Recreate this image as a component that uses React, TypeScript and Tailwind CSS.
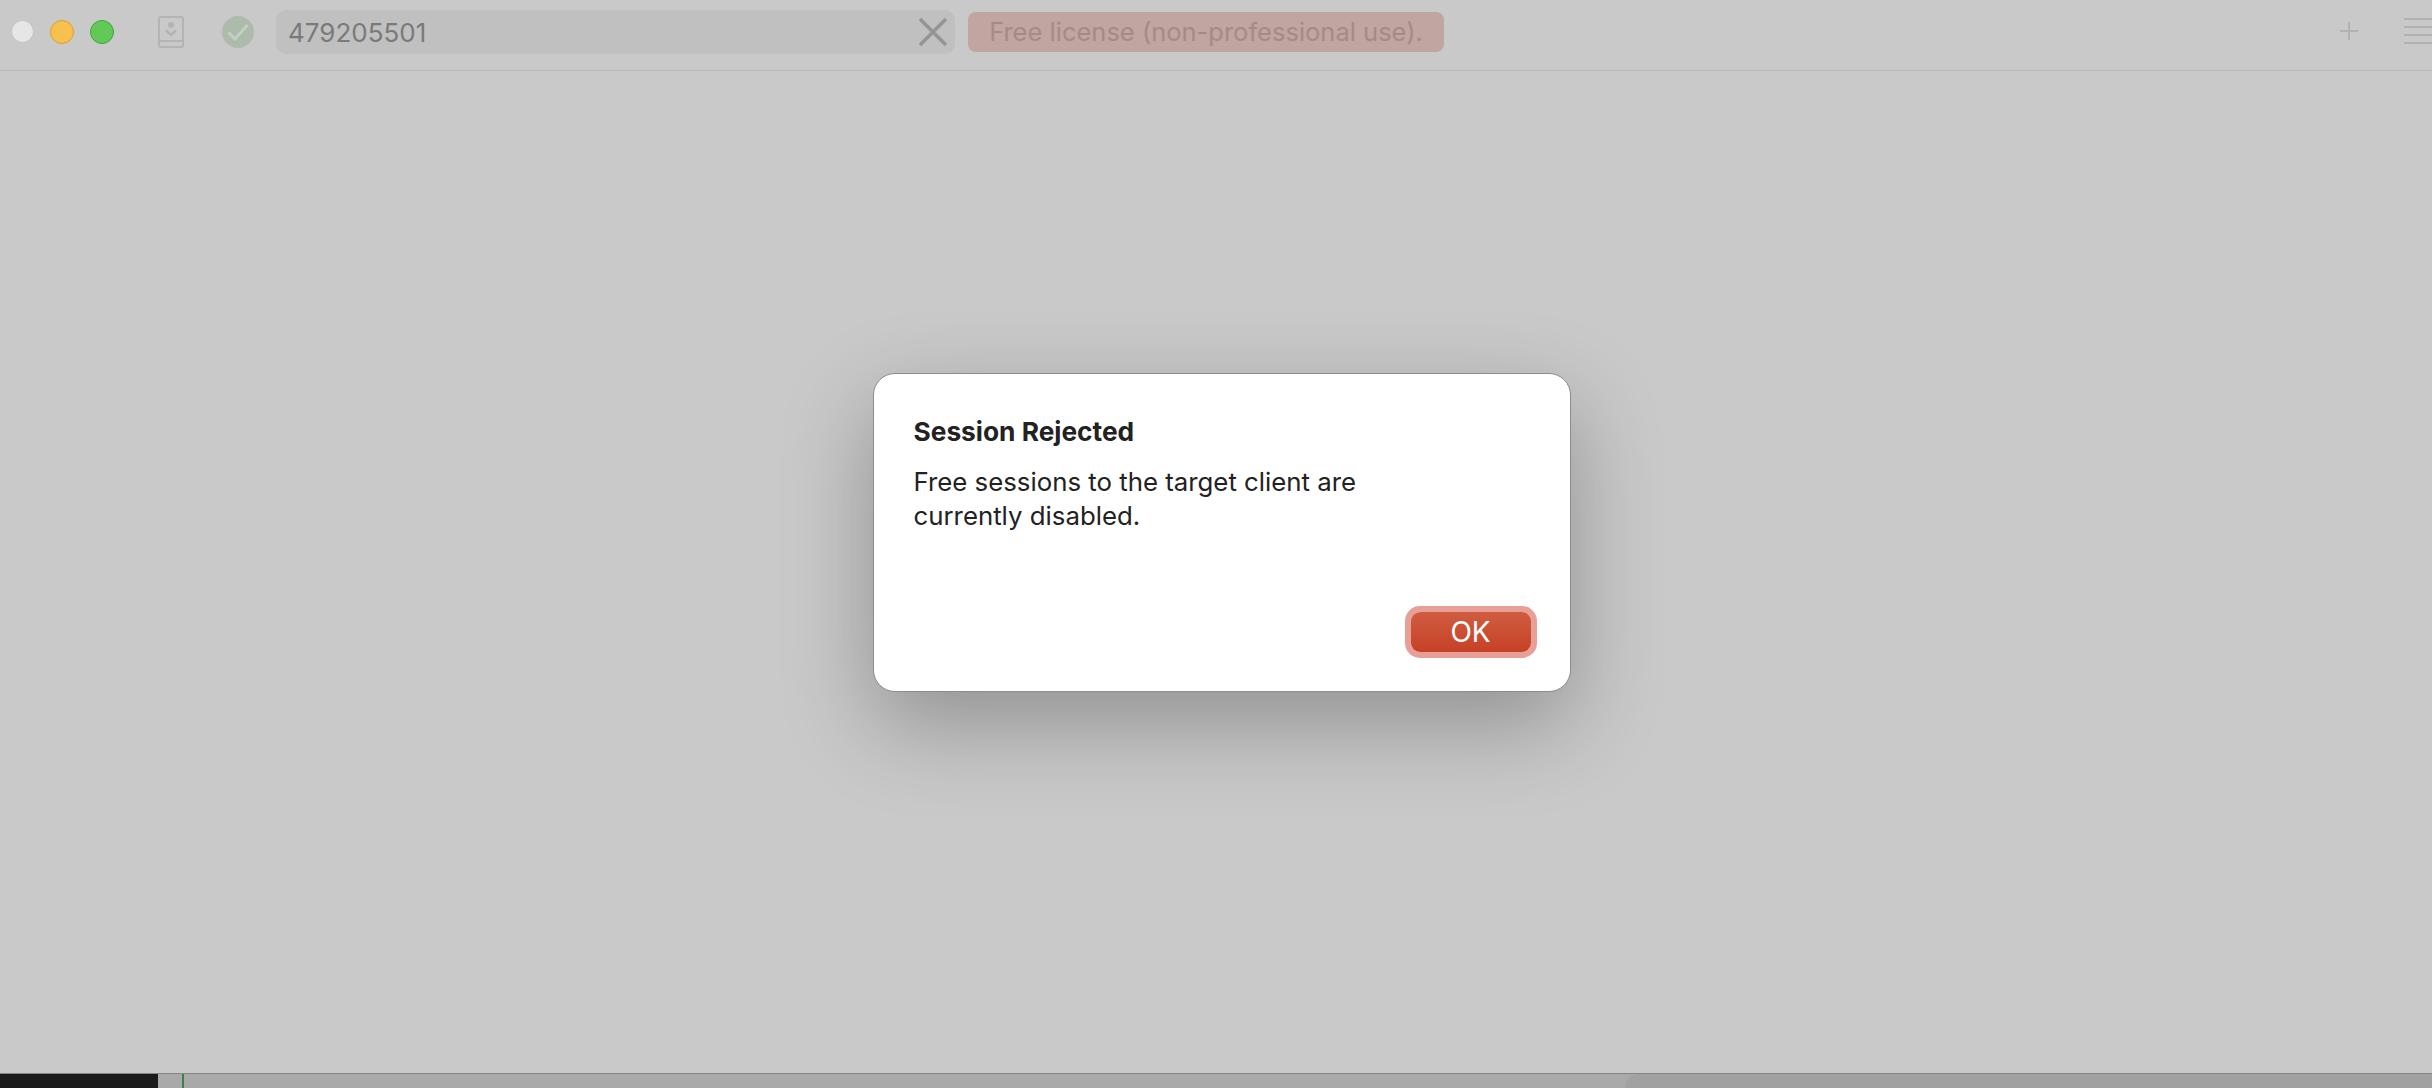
import React from 'react';

const uiFont = "font-['Inter','Noto_Sans',sans-serif]";

const Toolbar: React.FC = () => (
  <header className="flex h-[71px] shrink-0 items-start border-b border-[#bababa] bg-[#c9c9c9]">
    <div className="mt-[20px] ml-[11px] flex gap-[16px]">
      <div className="size-[23px] rounded-full border border-[#c4c4c4] bg-[#e6e6e6]" />
      <div className="size-[24px] rounded-full border border-[#d9a02f] bg-[#f7c04f]" />
      <div className="size-[24px] rounded-full border border-[#3fa73a] bg-[#62c858]" />
    </div>
    <svg className="mt-[16px] ml-[44px] shrink-0" width="26" height="32" viewBox="0 0 26 32" fill="none" stroke="#b4b4b4" strokeWidth="2">
      <path d="M3 1h20a2 2 0 0 1 2 2v26a2 2 0 0 1-2 2H3a2 2 0 0 1-2-2V3a2 2 0 0 1 2-2z" />
      <path d="M1 25h24" />
      <circle cx="13" cy="9" r="3" fill="#b4b4b4" stroke="none" />
      <path d="M8 14.5l5 4.5 5-4.5" strokeWidth="2.6" />
    </svg>
    <div className="mt-[16px] ml-[38px] flex size-[32px] shrink-0 items-center justify-center rounded-full bg-[#adbbad]">
      <svg width="22" height="18" viewBox="0 0 22 18" fill="none" stroke="#c6cfc6" strokeWidth="3">
        <path d="M1.5 9.5l6.5 6.5L20.5 2" />
      </svg>
    </div>
    <div className="mt-[10px] ml-[22px] flex h-[44px] w-[679px] shrink-0 items-center justify-between rounded-[10px] bg-[#c0c0c0] pr-[8px] pl-[12px]">
      <span className={`${uiFont} mt-[2px] text-[26px] leading-none text-[#7a7a7a]`}>479205501</span>
      <svg width="28" height="28" viewBox="0 0 28 28" fill="none" stroke="#949494" strokeWidth="3.5">
        <path d="M1 1l26 26M27 1L1 27" />
      </svg>
    </div>
    <div className={`${uiFont} mt-[12px] ml-[13px] flex h-[40px] w-[476px] shrink-0 items-center justify-center rounded-[8px] bg-[#c0a5a0] text-[25.5px] leading-none text-[#a58b87]`}>
      Free license (non-professional use).
    </div>
    <div className="flex-1" />
    <svg className="mt-[22px] mr-[46px] shrink-0" width="18" height="18" viewBox="0 0 18 18" stroke="#b2b2b2" strokeWidth="2">
      <path d="M0 9h18M9 0v18" />
    </svg>
    <div className="mt-[18px] flex w-[28px] shrink-0 flex-col gap-[6px]">
      <div className="h-[2px] bg-[#b2b2b2]" />
      <div className="h-[2px] bg-[#b2b2b2]" />
      <div className="h-[2px] bg-[#b2b2b2]" />
      <div className="h-[2px] bg-[#b2b2b2]" />
    </div>
  </header>
);

const Dialog: React.FC = () => (
  <div className={`${uiFont} flex h-[319px] w-[698px] flex-col rounded-[22px] border border-[#8c8c8c] bg-white pt-[41px] pr-[34px] pl-[40px] text-[#222222] shadow-[0_32px_90px_rgba(0,0,0,0.28)]`}>
    <h1 className="text-[26.3px] leading-[34px] font-bold">Session Rejected</h1>
    <p className="mt-[16px] w-[500px] text-[25.8px] leading-[34px]">Free sessions to the target client are currently disabled.</p>
    <div className="mt-auto mb-[39px] flex justify-end pr-[5px]">
      <button className="flex h-[40px] w-[120px] items-center justify-center rounded-[9px] bg-linear-to-b from-[#d05c40] to-[#c64126] text-[28px] leading-none text-white ring-[6px] ring-[#e6a097]">
        OK
      </button>
    </div>
  </div>
);

const App: React.FC = () => {
  return (
    <div className="flex h-screen flex-col overflow-hidden bg-[#a9a9a9]">
      <Toolbar />
      <main className="flex flex-1 justify-center bg-[#c9c9c9] pt-[302px] pl-[11px]">
        <Dialog />
      </main>
      {/* what shows behind the window */}
      <div className="flex h-[15px] shrink-0 border-t border-[#858585]">
        <div className="w-[158px] bg-[#1a1a1a]" />
        <div className="ml-[24px] w-[2px] bg-[#3f7f4a]" />
        <div className="flex-1" />
        <div className="w-[807px] rounded-tl-[14px] bg-[#a1a1a1]" />
      </div>
    </div>
  );
};

export default App;
